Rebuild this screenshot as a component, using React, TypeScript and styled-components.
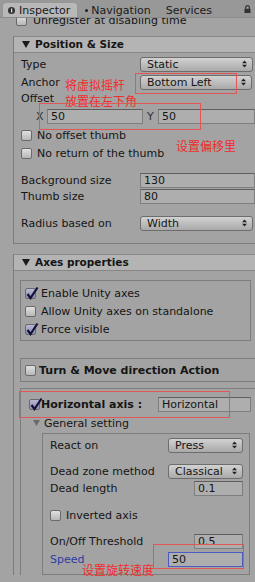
import React from "react";
import styled, { createGlobalStyle } from "styled-components";

const GlobalStyle = createGlobalStyle`
  html, body {
    margin: 0;
    padding: 0;
    background: #a3a3a3;
  }
  body {
    font-family: "DejaVu Sans", "Noto Sans CJK SC", sans-serif;
  }
`;

const Root = styled.div`
  position: relative;
  width: 255px;
  height: 582px;
  overflow: hidden;
  background: #a3a3a3;
  color: #151515;
  font-size: 11px;
  line-height: 1;
`;

// tab strip
const TabBar = styled.div`
  display: flex;
  align-items: flex-end;
  height: 18px;
  box-sizing: border-box;
  padding-left: 3px;
  background: #989898;
  border-bottom: 1px solid #8b8b8b;
`;

const Tab = styled.div<{ $active?: boolean; $pl: number; $pr: number }>`
  display: flex;
  align-items: center;
  gap: ${(p) => (p.$active ? 4 : 3)}px;
  height: 14px;
  padding: 0 ${(p) => p.$pr}px 0 ${(p) => p.$pl}px;
  border-radius: 3px 3px 0 0;
  background: ${(p) => (p.$active ? "#b8b8b8" : "transparent")};
  color: #1a1a1a;
  font-size: 11px;
`;

const LockWrap = styled.div`
  margin-left: auto;
  margin-right: 4px;
  align-self: center;
  display: flex;
`;

const CutRow = styled.div`
  height: 10px;
  overflow: hidden;
`;

const CutInner = styled.div`
  display: flex;
  align-items: center;
  gap: 6px;
  height: 16px;
  margin-top: -6px;
  padding-left: 16px;
`;

// foldout panels
const Section = styled.div<{ $top: number; $closed?: boolean }>`
  margin: ${(p) => p.$top}px 0 0 13px;
  width: 243px;
  border-left: 1px solid #7b7b7b;
  border-bottom: ${(p) => (p.$closed ? "1px solid #7b7b7b" : "none")};
`;

const Header = styled.div`
  display: flex;
  align-items: center;
  gap: 5px;
  height: 15px;
  padding-left: 8px;
  background: #b4b4b4;
  border-top: 1px solid #8a8a8a;
  border-bottom: 1px solid #868686;
  font-weight: bold;
  font-size: 10.5px;
`;

const PositionBody = styled.div`
  padding: 2px 2px 12px 7px;
`;

const Row = styled.div<{ $h: number; $label: number }>`
  display: grid;
  grid-template-columns: ${(p) => p.$label}px 1fr;
  align-items: center;
  height: ${(p) => p.$h}px;
`;

const Label = styled.span<{ $focus?: boolean }>`
  white-space: nowrap;
  color: ${(p) => (p.$focus ? "#2e3ba3" : "#151515")};
`;

const Spacer = styled.div<{ $h: number }>`
  height: ${(p) => p.$h}px;
`;

const Dropdown = styled.div<{ $mr?: number }>`
  display: flex;
  align-items: center;
  justify-content: space-between;
  height: 15px;
  box-sizing: border-box;
  margin-right: ${(p) => p.$mr ?? 0}px;
  padding: 0 5px 0 6px;
  border: 1px solid #6d6d6d;
  border-radius: 3px;
  background: linear-gradient(#d2d2d2, #a9a9a9);
  font-size: 11px;
`;

const Field = styled.div<{ $w?: number; $focus?: boolean }>`
  display: flex;
  align-items: center;
  height: 15px;
  width: ${(p) => (p.$w ? `${p.$w}px` : "auto")};
  justify-self: ${(p) => (p.$w ? "end" : "stretch")};
  box-sizing: border-box;
  padding-left: 3px;
  background: #aeaeae;
  border: 1px solid ${(p) => (p.$focus ? "#4a5bc2" : "#7e7e7e")};
  border-top-color: ${(p) => (p.$focus ? "#4a5bc2" : "#5e5e5e")};
  font-size: 11px;
`;

const XYRow = styled.div`
  display: flex;
  align-items: center;
  height: 22px;
  padding-left: 15px;
`;

const Axis = styled.span`
  width: 11px;
  color: #303030;
`;

const XYGap = styled.div`
  width: 4px;
`;

const CheckRow = styled.div<{ $h: number; $gap?: number }>`
  display: flex;
  align-items: center;
  gap: ${(p) => p.$gap ?? 5}px;
  height: ${(p) => p.$h}px;
`;

const Box = styled.span<{ $checked?: boolean }>`
  position: relative;
  flex: none;
  width: 11px;
  height: 11px;
  box-sizing: border-box;
  border: 1px solid #6a6a6a;
  border-radius: 2px;
  background: ${(p) =>
    p.$checked
      ? "linear-gradient(#b8b8d2, #8e8eae)"
      : "linear-gradient(#e0e0e0, #b7b7b7)"};
`;

const Tick = styled.svg`
  position: absolute;
  left: 0;
  top: -3px;
`;

const AxesBody = styled.div`
  padding: 9px 0 0 6px;
`;

const UnityBox = styled.div`
  width: 231px;
  box-sizing: border-box;
  border: 1px solid #7d7d7d;
  padding: 3px 0 2px 4px;
`;

const TurnBox = styled.div`
  display: flex;
  align-items: center;
  gap: 3px;
  width: 240px;
  height: 24px;
  box-sizing: border-box;
  margin-top: 17px;
  padding-left: 4px;
  border: 1px solid #7d7d7d;
  font-weight: bold;
`;

const AxisBox = styled.div`
  width: 236px;
  margin-top: 6px;
  padding: 7px 5px 0 8px;
  box-sizing: border-box;
  border-top: 1px solid #7d7d7d;
  border-left: 1px solid #7d7d7d;
`;

const AxisRow = styled.div`
  display: flex;
  align-items: center;
  gap: 1px;
  height: 17px;
  font-weight: bold;
`;

const AxisField = styled(Field)`
  margin-left: auto;
  width: 93px;
  font-weight: normal;
`;

const Foldout = styled.div`
  display: flex;
  align-items: center;
  gap: 4px;
  height: 20px;
  padding-left: 4px;
`;

const GenBox = styled.div`
  width: 208px;
  margin-left: 13px;
  box-sizing: border-box;
  padding: 2px 6px 6px 7px;
  border: 1px solid #7d7d7d;
`;

// red notes drawn over the screenshot
const Note = styled.div<{ $x: number; $y: number }>`
  position: absolute;
  left: ${(p) => p.$x}px;
  top: ${(p) => p.$y}px;
  color: #f22b2b;
  font-family: "Noto Sans CJK SC", sans-serif;
  font-size: 12px;
  line-height: 16px;
  white-space: nowrap;
`;

const Frame = styled.div<{ $x: number; $y: number; $w: number; $h: number }>`
  position: absolute;
  left: ${(p) => p.$x}px;
  top: ${(p) => p.$y}px;
  width: ${(p) => p.$w}px;
  height: ${(p) => p.$h}px;
  box-sizing: border-box;
  border: 1px solid #e25656;
`;

const Arrows = () => (
  <svg width="5" height="8" viewBox="0 0 5 8">
    <path d="M0 3.2 L2.5 0.5 L5 3.2Z M0 4.8 L2.5 7.5 L5 4.8Z" fill="#222" />
  </svg>
);

const Fold = ({ color = "#1a1a1a", w = 8 }: { color?: string; w?: number }) => (
  <svg width={w} height={w - 1} viewBox="0 0 8 7">
    <path d="M0 0 H8 L4 7Z" fill={color} />
  </svg>
);

const Check = ({ checked }: { checked?: boolean }) => (
  <Box $checked={checked}>
    {checked && (
      <Tick width="13" height="14" viewBox="0 0 13 14">
        <path
          d="M1.5 8 L4.5 12 L11.5 1.5"
          fill="none"
          stroke="#12123a"
          strokeWidth="2.2"
        />
      </Tick>
    )}
  </Box>
);

const Select = ({ value, mr }: { value: string; mr?: number }) => (
  <Dropdown $mr={mr}>
    <span>{value}</span>
    <Arrows />
  </Dropdown>
);

export default function App() {
  return (
    <Root>
      <GlobalStyle />
      <TabBar>
        <Tab $active $pl={5} $pr={7}>
          <svg width="7" height="7" viewBox="0 0 7 7">
            <circle cx="3.5" cy="3.5" r="3.5" fill="#333" />
            <rect x="3" y="1.5" width="1.2" height="4" fill="#ddd" />
          </svg>
          Inspector
        </Tab>
        <Tab $pl={8} $pr={7}>
          <svg width="3" height="3" viewBox="0 0 3 3">
            <circle cx="1.5" cy="1.5" r="1.5" fill="#222" />
          </svg>
          Navigation
        </Tab>
        <Tab $pl={8} $pr={4}>
          Services
        </Tab>
        <LockWrap>
          <svg width="7" height="8" viewBox="0 0 7 8">
            <path
              d="M1.7 4 V2.5 A1.8 1.8 0 0 1 5.3 2.5 V4"
              fill="none"
              stroke="#333"
              strokeWidth="1.2"
            />
            <rect x="0.5" y="3.8" width="6" height="4.2" fill="#333" />
          </svg>
        </LockWrap>
      </TabBar>

      <CutRow>
        <CutInner>
          <Check />
          <span>Unregister at disabling time</span>
        </CutInner>
      </CutRow>

      <Section $top={8} $closed>
        <Header>
          <Fold />
          Position &amp; Size
        </Header>
        <PositionBody>
          <Row $h={18} $label={119}>
            <Label>Type</Label>
            <Select value="Static" mr={2} />
          </Row>
          <Row $h={18} $label={119}>
            <Label>Anchor</Label>
            <Select value="Bottom Left" mr={3} />
          </Row>
          <Row $h={14} $label={119}>
            <Label>Offset</Label>
          </Row>
          <XYRow>
            <Axis>X</Axis>
            <Field $w={96}>50</Field>
            <XYGap />
            <Axis>Y</Axis>
            <Field style={{ flex: 1 }}>50</Field>
          </XYRow>
          <CheckRow $h={17}>
            <Check />
            No offset thumb
          </CheckRow>
          <CheckRow $h={18}>
            <Check />
            No return of the thumb
          </CheckRow>
          <Spacer $h={10} />
          <Row $h={16} $label={119}>
            <Label>Background size</Label>
            <Field>130</Field>
          </Row>
          <Row $h={16} $label={119}>
            <Label>Thumb size</Label>
            <Field>80</Field>
          </Row>
          <Spacer $h={11} />
          <Row $h={16} $label={119}>
            <Label>Radius based on</Label>
            <Select value="Width" mr={2} />
          </Row>
        </PositionBody>
      </Section>

      <Section $top={10}>
        <Header>
          <Fold />
          Axes properties
        </Header>
        <AxesBody>
          <UnityBox>
            <CheckRow $h={18}>
              <Check checked />
              Enable Unity axes
            </CheckRow>
            <CheckRow $h={18}>
              <Check />
              Allow Unity axes on standalone
            </CheckRow>
            <CheckRow $h={18}>
              <Check checked />
              Force visible
            </CheckRow>
          </UnityBox>

          <TurnBox>
            <Check />
            Turn &amp; Move direction Action
          </TurnBox>

          <AxisBox>
            <AxisRow>
              <Check checked />
              Horizontal axis :
              <AxisField>Horizontal</AxisField>
            </AxisRow>
            <Foldout>
              <Fold color="#6a6a6a" w={7} />
              General setting
            </Foldout>
            <GenBox>
              <Row $h={18} $label={118}>
                <Label>React on</Label>
                <Select value="Press" />
              </Row>
              <Spacer $h={8} />
              <Row $h={18} $label={118}>
                <Label>Dead zone method</Label>
                <Select value="Classical" />
              </Row>
              <Row $h={16} $label={118}>
                <Label>Dead length</Label>
                <Field $w={49}>0.1</Field>
              </Row>
              <Spacer $h={9} />
              <CheckRow $h={20}>
                <Check />
                Inverted axis
              </CheckRow>
              <Spacer $h={7} />
              <Row $h={18} $label={118}>
                <Label>On/Off Threshold</Label>
                <Field $w={49}>0.5</Field>
              </Row>
              <Row $h={18} $label={118}>
                <Label $focus>Speed</Label>
                <Field $focus>50</Field>
              </Row>
            </GenBox>
          </AxisBox>
        </AxesBody>
      </Section>

      <Frame $x={135} $y={73} $w={102} $h={21} />
      <Note $x={65} $y={77}>将虚拟摇杆</Note>
      <Note $x={65} $y={93}>放置在左下角</Note>
      <Frame $x={39} $y={103} $w={162} $h={27} />
      <Note $x={176} $y={138}>设置偏移里</Note>
      <Frame $x={19} $y={391} $w={211} $h={27} />
      <Frame $x={153} $y={544} $w={91} $h={25} />
      <Note $x={82} $y={562}>设置旋转速度</Note>
    </Root>
  );
}
